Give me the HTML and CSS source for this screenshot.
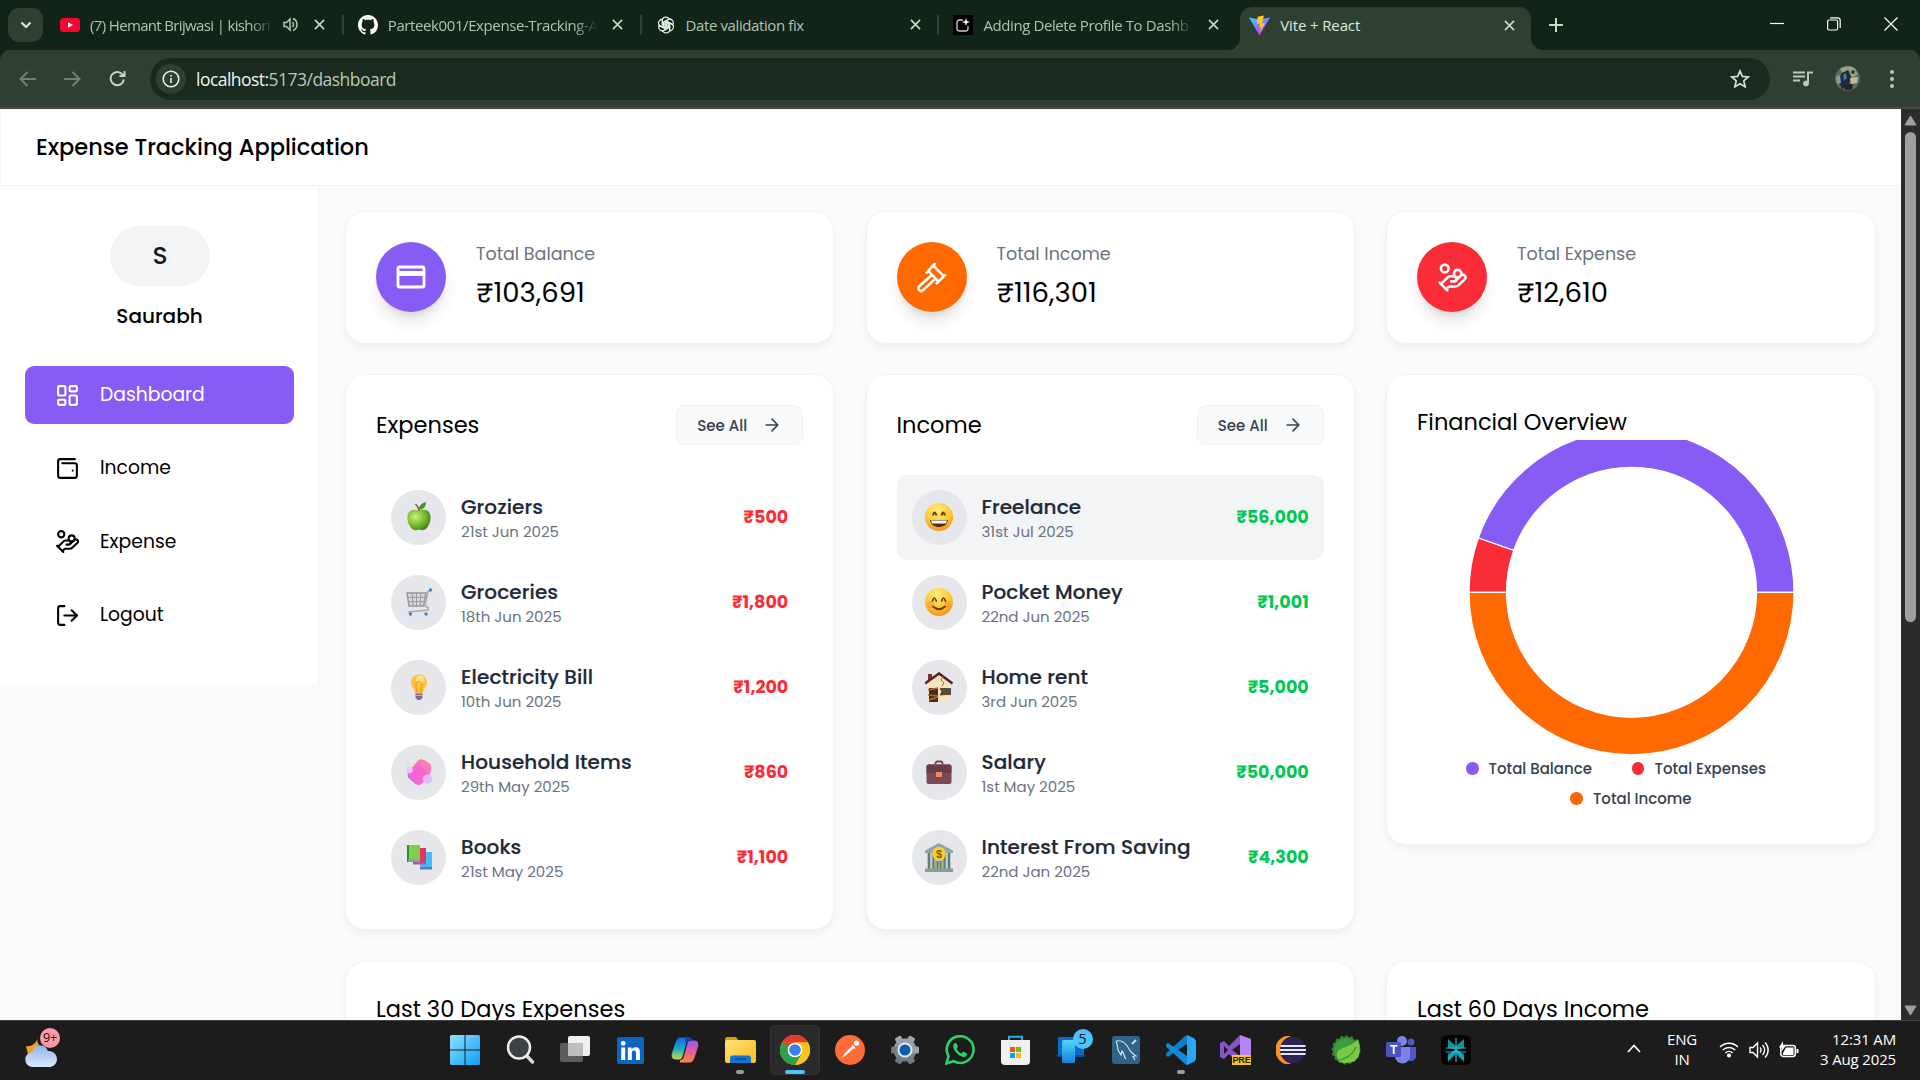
FILE: index.html
```html
<!DOCTYPE html>
<html lang="en">
<head>
<meta charset="utf-8">
<title>Vite + React</title>
<link rel="stylesheet" href="styles.css">
</head>
<body>
<svg class="sprite" aria-hidden="true">
  <symbol id="i-close" viewBox="0 0 12 12"><path d="M1 1l10 10M11 1L1 11" fill="none" stroke="currentColor" stroke-width="1.8"/></symbol>
  <symbol id="i-arrow" viewBox="0 0 24 24"><path d="M5 12h14M12 5l7 7-7 7" fill="none" stroke="currentColor" stroke-width="2" stroke-linecap="round" stroke-linejoin="round"/></symbol>
  <symbol id="i-coins" viewBox="0 0 24 24"><g fill="none" stroke="currentColor" stroke-width="2" stroke-linecap="round" stroke-linejoin="round"><path d="M11 15h2a2 2 0 1 0 0-4h-3c-.6 0-1.1.2-1.4.6L3 17"/><path d="m7 21 1.6-1.4c.3-.4.8-.6 1.4-.6h4c1.1 0 2.1-.4 2.8-1.2l4.6-4.4a2 2 0 0 0-2.75-2.91l-4.2 3.9"/><path d="m2 16 6 6"/><circle cx="16" cy="9" r="2.9"/><circle cx="6" cy="5" r="3"/></g></symbol>
  <linearGradient id="g-win" x1="0" y1="0" x2="1" y2="1"><stop offset="0" stop-color="#8be3fd"/><stop offset="1" stop-color="#0f9bfb"/></linearGradient>
  <linearGradient id="g-cloud" x1="0" y1="0" x2="0" y2="1"><stop offset="0" stop-color="#8fb4ea"/><stop offset="1" stop-color="#dbe9fd"/></linearGradient>
  <linearGradient id="g-folder" x1="0" y1="0" x2="1" y2="1"><stop offset="0" stop-color="#ffe078"/><stop offset="1" stop-color="#fdbd1c"/></linearGradient>
  <linearGradient id="g-vite" x1="0" y1="0" x2=".5" y2="1"><stop offset="0" stop-color="#41d1ff"/><stop offset="1" stop-color="#bd34fe"/></linearGradient>
  <linearGradient id="g-cop1" x1="0" y1="0" x2="0" y2="1"><stop offset="0" stop-color="#1668e8"/><stop offset=".5" stop-color="#18a7c8"/><stop offset="1" stop-color="#c8d83c"/></linearGradient>
  <linearGradient id="g-cop2" x1="0" y1="0" x2="0" y2="1"><stop offset="0" stop-color="#9a5be8"/><stop offset=".5" stop-color="#e25b9a"/><stop offset="1" stop-color="#fb8b3c"/></linearGradient>
  <radialGradient id="g-face" cx=".45" cy=".25" r=".8"><stop offset="0" stop-color="#fff07a"/><stop offset=".6" stop-color="#fdc52f"/><stop offset="1" stop-color="#f08a1c"/></radialGradient>
  <radialGradient id="g-apple" cx=".35" cy=".35" r=".75"><stop offset="0" stop-color="#c8f08a"/><stop offset=".5" stop-color="#7cc22c"/><stop offset="1" stop-color="#3d7a1c"/></radialGradient>
  <linearGradient id="g-soap" x1="1" y1="0" x2="0" y2="1"><stop offset="0" stop-color="#fb86a0"/><stop offset=".5" stop-color="#f86fce"/><stop offset="1" stop-color="#dd62e0"/></linearGradient>
  <linearGradient id="g-gray" x1="0" y1="0" x2="0" y2="1"><stop offset="0" stop-color="#a3a9b2"/><stop offset="1" stop-color="#6c747e"/></linearGradient>
  <linearGradient id="g-phone" x1="0" y1="0" x2="0" y2="1"><stop offset="0" stop-color="#50d8f8"/><stop offset="1" stop-color="#1580d8"/></linearGradient>
</svg>

<div class="tabstrip">
  <div class="tab-search"><svg width="12" height="8" viewBox="0 0 12 8"><path d="M1.5 1.5L6 6l4.500-4.500" fill="none" stroke="#d5e8d6" stroke-width="2.200"/></svg></div>
  <div class="tab">
    <svg width="20" height="20" viewBox="0 0 20 20"><rect y="3" width="20" height="14" rx="4" fill="#ff0033"/><path d="M8 7.200v5.600l5-2.800z" fill="#fff"/></svg>
    <span class="tab-title fade snug">(7) Hemant Brijwasi | kishori</span>
    <svg class="audio" width="15" height="15" viewBox="0 0 15 15" fill="none" stroke="#b5c9b6" stroke-width="1.500"><path d="M1 5.500h2.500L7 2v11L3.500 9.500H1z"/><path d="M9.500 5a3.500 3.500 0 0 1 0 5M10 1.500a6.500 6.500 0 0 1 0 12"/></svg>
    <svg class="x"><use href="#i-close"/></svg>
  </div>
  <div class="tab">
    <svg width="20" height="20" viewBox="0 0 16 16"><path fill="#fff" d="M8 0C3.580 0 0 3.580 0 8c0 3.540 2.290 6.530 5.470 7.590.4.070.55-.17.55-.38 0-.19-.01-.82-.01-1.490-2.010.37-2.530-.49-2.690-.94-.09-.23-.48-.94-.82-1.130-.28-.15-.68-.52-.01-.53.63-.01 1.080.58 1.230.82.72 1.210 1.870.87 2.330.66.07-.52.28-.87.51-1.070-1.780-.2-3.640-.89-3.640-3.950 0-.87.31-1.590.82-2.150-.08-.2-.36-1.020.08-2.120 0 0 .67-.21 2.200.82.64-.18 1.320-.27 2-.27s1.360.09 2 .27c1.530-1.040 2.200-.82 2.200-.82.44 1.100.16 1.920.08 2.120.51.56.82 1.270.82 2.150 0 3.070-1.870 3.750-3.650 3.950.29.25.54.73.54 1.480 0 1.070-.01 1.930-.01 2.200 0 .21.15.46.55.38A8.010 8.010 0 0 0 16 8c0-4.420-3.580-8-8-8z"/></svg>
    <span class="tab-title fade">Parteek001/Expense-Tracking-A</span>
    <svg class="x"><use href="#i-close"/></svg>
  </div>
  <div class="tab">
    <svg width="20" height="18" viewBox="0 0 24 24" fill="none" stroke="#e6efe6" stroke-width="1.600"><g id="petal"><path d="M12 1.500c-3 0-5 2-5 5V13l5 3 M12 1.500c2 0 3.600 1 4.400 2.500L11 7v5.500"/></g><use href="#petal" transform="rotate(60 12 12)"/><use href="#petal" transform="rotate(120 12 12)"/><use href="#petal" transform="rotate(180 12 12)"/><use href="#petal" transform="rotate(240 12 12)"/><use href="#petal" transform="rotate(300 12 12)"/></svg>
    <span class="tab-title">Date validation fix</span>
    <svg class="x"><use href="#i-close"/></svg>
  </div>
  <div class="tab">
    <svg width="20" height="20" viewBox="0 0 20 20"><path fill="#000" d="M0 0h20v20H0z"/><path d="M10 5H6.500A2.500 2.500 0 0 0 4 7.500v6A2.500 2.500 0 0 0 6.500 16h6a2.500 2.500 0 0 0 2.500-2.500V11" fill="none" stroke="#ccc" stroke-width="1.300"/><path d="M13 3l1 3 3 1-3 1-1 3-1-3-3-1 3-1z" fill="#fff"/></svg>
    <span class="tab-title fade">Adding Delete Profile To Dashb</span>
    <svg class="x"><use href="#i-close"/></svg>
  </div>
  <div class="tab tab-active">
    <svg width="21" height="21" viewBox="0 0 21 21"><path d="M0 2.500l10.500 18L21 2.500 10.500 4.500z" fill="url(#g-vite)"/><path d="M15 .5L8.500 1.800 8 9l3-.6-.8 4.200 1.800-.5-1 5.400 5-9.500-3 .6L15 .5z" fill="#ffc820"/></svg>
    <span class="tab-title">Vite + React</span>
    <svg class="x"><use href="#i-close"/></svg>
  </div>
  <svg class="plus" width="14" height="14" viewBox="0 0 14 14"><path d="M7 0v14M0 7h14" stroke="#c5dbc6" stroke-width="2"/></svg>
  <div class="window-controls">
    <svg width="14" height="14" viewBox="0 0 14 14"><path d="M0 6.500h14" stroke="#fff" stroke-width="1.200"/></svg>
    <svg width="14" height="14" viewBox="0 0 14 14" fill="none" stroke="#fff" stroke-width="1.200"><rect x=".6" y="3" width="10" height="10" rx="1.500"/><path d="M3 .8h7.500a2.700 2.700 0 0 1 2.700 2.700V11"/></svg>
    <svg width="14" height="14" viewBox="0 0 14 14"><path d="M.5.5l13 13M13.500.5l-13 13" stroke="#fff" stroke-width="1.200"/></svg>
  </div>
</div>

<div class="toolbar">
  <svg class="tb-nav dim" width="17" height="16" viewBox="0 0 17 16"><path d="M17 8H2M8.500 1L1.500 8l7 7"/></svg>
  <svg class="tb-nav dim" width="17" height="16" viewBox="0 0 17 16"><path d="M0 8h15M8.500 1l7 7-7 7"/></svg>
  <svg class="tb-nav" width="17" height="17" viewBox="0 0 17 17"><path d="M14.800 9.500a6.600 6.600 0 1 1-1.600-5.300L15.500 6M15.500 1v5h-5"/></svg>
  <div class="omnibox">
    <div class="site-info"><svg width="18" height="18" viewBox="0 0 18 18" fill="none" stroke="#e8f3e8" stroke-width="1.600"><circle cx="9" cy="9" r="7.800"/><path d="M9 8v5M9 5v1.600"/></svg></div>
    <span class="url">localhost:<span class="url-rest">5173/dashboard</span></span>
    <svg width="20" height="20" viewBox="0 0 20 20" fill="none" stroke="#d5dfd5" stroke-width="1.700"><path d="M10 2l2.400 5.400 5.800.6-4.400 3.900 1.300 5.800L10 14.700l-5.100 3 1.300-5.800L1.800 8l5.800-.6z"/></svg>
  </div>
  <svg class="media" width="20" height="16" viewBox="0 0 20 16" fill="none" stroke="#b5cdb6" stroke-width="2"><path d="M0 1.500h12M0 5.500h12M0 9.500h7M15 12V1.500h5"/><circle cx="13" cy="12.500" r="2.500" fill="#b5cdb6" stroke-width="1"/></svg>
  <svg class="avatar-pic" width="25" height="25" viewBox="0 0 25 25"><circle cx="12.500" cy="12.500" r="12.500" fill="#5d6a58"/><path d="M5 3c5-3 10-4 15-.5l3 6-6 3-3-7-6 3z" fill="#96a189"/><path d="M7 7l6-3 3 8-3 9-6 2-4-8z" fill="#1c2c3e"/><path d="M8 9l3-2 1 5-3 3z" fill="#4a7391"/><path d="M15 12l8-1-1 6-6 1z" fill="#cbb9a0"/><path d="M1 11l4-2 1 8-4 1z" fill="#7aa0b0"/><path d="M9 18l9 0-1 6-7 0z" fill="#20262c"/><path d="M17 4l3 1-1 3-3-1z" fill="#2e3a2a"/></svg>
  <svg width="4" height="18" viewBox="0 0 4 18" fill="#b5cdb6"><circle cx="2" cy="2" r="2"/><circle cx="2" cy="9" r="2"/><circle cx="2" cy="16" r="2"/></svg>
</div>

<div class="viewport">
  <div class="page">
    <header class="app-header">Expense Tracking Application</header>
    <div class="app-body">
      <aside class="sidebar">
        <div class="initial">S</div>
        <div class="user">Saurabh</div>
        <nav class="nav">
          <a class="nav-item active"><svg viewBox="0 0 24 24"><rect width="7" height="9" x="3" y="3" rx="1"/><rect width="7" height="5" x="14" y="3" rx="1"/><rect width="7" height="9" x="14" y="12" rx="1"/><rect width="7" height="5" x="3" y="16" rx="1"/></svg><span>Dashboard</span></a>
          <a class="nav-item"><svg viewBox="0 0 24 24"><path d="M17 14h.01"/><path d="M7 7h12a2 2 0 0 1 2 2v10a2 2 0 0 1-2 2H5a2 2 0 0 1-2-2V5a2 2 0 0 1 2-2h14"/></svg><span>Income</span></a>
          <a class="nav-item"><svg><use href="#i-coins"/></svg><span>Expense</span></a>
          <a class="nav-item"><svg viewBox="0 0 24 24"><path d="m16 17 5-5-5-5"/><path d="M21 12H9"/><path d="M9 21H5a2 2 0 0 1-2-2V5a2 2 0 0 1 2-2h4"/></svg><span>Logout</span></a>
        </nav>
      </aside>

      <main class="main">
        <section class="card stat">
          <div class="badge purple"><svg width="30" height="24" viewBox="0 0 30 24"><rect x="2" y="2" width="26" height="20" rx="1.500" fill="none" stroke="#fff" stroke-width="2.800"/><path d="M2 6h26v5H2z" fill="#fff"/></svg></div>
          <div><div class="stat-label">Total Balance</div><div class="stat-value">₹103,691</div></div>
        </section>
        <section class="card stat">
          <div class="badge orange"><svg width="31" height="31" viewBox="0 0 24 24" fill="none" stroke="#fff" stroke-width="2" stroke-linecap="round" stroke-linejoin="round"><path d="M8.200 8.200l6.300-6.700M16 16.500l6.500-6.300M13.500 2.800l7.700 8M9.700 7l7.600 8M12 10.200l-9.500 8.600a2.100 2.100 0 0 0 3 3L15 12.900"/></svg></div>
          <div><div class="stat-label">Total Income</div><div class="stat-value">₹116,301</div></div>
        </section>
        <section class="card stat">
          <div class="badge red"><svg width="31" height="31"><use href="#i-coins"/></svg></div>
          <div><div class="stat-label">Total Expense</div><div class="stat-value">₹12,610</div></div>
        </section>

        <section class="card list">
          <div class="card-head"><h2>Expenses</h2><button class="see-all">See All <svg width="20" height="20"><use href="#i-arrow"/></svg></button></div>
          <div class="item"><div class="icon"><svg width="30" height="30" viewBox="0 0 30 30"><path d="M15 9c2-1.500 6-2 9 0 4 3.500 3 11-.5 16-2.500 4-6 3.500-8.500 2.600-2.500.9-6 1.400-8.500-2.600C3 20 2 12.500 6 9c3-2 7-1.500 9 0z" fill="url(#g-apple)"/><path d="M15 8c0-5 3-7 7-8 0 5-3 7.500-7 8z" fill="#3e9427"/><path d="M15 9c0-3-1.500-5-3.500-7" fill="none" stroke="#6b5540" stroke-width="1.300"/></svg></div><div class="info"><div class="name">Groziers</div><div class="date">21st Jun 2025</div></div><div class="amount out">₹500</div></div>
          <div class="item"><div class="icon"><svg width="28" height="28" viewBox="0 0 28 28"><path d="M2 5h19l-2.500 13H4z" fill="#d9d9de" stroke="#9b969f" stroke-width="1.500"/><path d="M2.500 9.300h18M3 13.700h17M7 5l1 13M11.500 5v13M16 5l-1 13" stroke="#9b969f" stroke-width="1"/><path d="M26 2l-3 1-3 15 3 1.500V22L3 24" fill="none" stroke="#b0a9b4" stroke-width="1.600"/><circle cx="25.500" cy="2" r="1.700" fill="#3d7fd0"/><circle cx="5.500" cy="26" r="1.700" fill="#3d7fd0"/><circle cx="21" cy="26" r="1.700" fill="#3d7fd0"/></svg></div><div class="info"><div class="name">Groceries</div><div class="date">18th Jun 2025</div></div><div class="amount out">₹1,800</div></div>
          <div class="item"><div class="icon"><svg width="28" height="28" viewBox="0 0 28 28"><path d="M14 1.500c5 0 8 3.500 8 8 0 4.500-3.500 6-4 11h-8c-.5-5-4-6.500-4-11 0-4.500 3-8 8-8z" fill="#fcc43c"/><circle cx="15" cy="6.500" r="4" fill="#ffe9a0" opacity=".7"/><path d="M12.500 20l-1.500-7a3.200 3.200 0 1 1 6 0l-1.500 7" fill="none" stroke="#f09a2a" stroke-width="1.200"/><path d="M10.500 20.500h7v4l-2 2.500h-3l-2-2.500z" fill="#84689a"/><path d="M10.500 22.500h7" stroke="#c2aed2"/></svg></div><div class="info"><div class="name">Electricity Bill</div><div class="date">10th Jun 2025</div></div><div class="amount out">₹1,200</div></div>
          <div class="item"><div class="icon"><svg width="28" height="28" viewBox="0 0 28 28"><path d="M13 2.500c2-1.500 4-1.500 6-.5l5 3c2 1 2.500 3 2 6.500l-1.500 7L16 26.500c-2 1-4 .5-5.500-.5L4 20.500c-1.500-1.500-2-4-1-6z" fill="url(#g-soap)"/><path d="M12 7.500l7 4 2.500 4-7 7-8-5.500 1-4z" fill="#f55fd0" opacity=".7"/><circle cx="4.500" cy="12" r="3.200" fill="#e7c6fb"/><circle cx="22.500" cy="21" r="4.600" fill="#dfbcf9"/><circle cx="3" cy="5" r="1.200" fill="#eed2fa"/></svg></div><div class="info"><div class="name">Household Items</div><div class="date">29th May 2025</div></div><div class="amount out">₹860</div></div>
          <div class="item"><div class="icon"><svg width="28" height="28" viewBox="0 0 28 28"><path d="M15 9h12v16H15z" fill="#3fc0f6"/><path d="M15 24h12v2.500H15z" fill="#5a7bc4"/><path d="M8 5h13v14H8z" fill="#e33263"/><path d="M8 19h13v2.500H8z" fill="#b85588"/><path d="M2 2h13v15H2z" fill="#7ed04c"/><path d="M2 2h2v17H2z" fill="#2e8a3c"/><path d="M3 16.500h12v2.500H3z" fill="#8e9ab0"/></svg></div><div class="info"><div class="name">Books</div><div class="date">21st May 2025</div></div><div class="amount out">₹1,100</div></div>
        </section>

        <section class="card list">
          <div class="card-head"><h2>Income</h2><button class="see-all">See All <svg width="20" height="20"><use href="#i-arrow"/></svg></button></div>
          <div class="item hovered"><div class="icon"><svg width="28" height="28" viewBox="0 0 28 28"><circle cx="14" cy="14" r="14" fill="url(#g-face)"/><path d="M8 12.500q1.500-6 3.500 0M16.500 12.500q1.500-6 3.500 0" fill="none" stroke="#6b3a12" stroke-width="2"/><path d="M5 17h18c-1 5-4.500 7-9 7s-8-2-9-7z" fill="#5a2c12"/><path d="M6 17.500h16l-1 3H7z" fill="#fff"/></svg></div><div class="info"><div class="name">Freelance</div><div class="date">31st Jul 2025</div></div><div class="amount in">₹56,000</div></div>
          <div class="item"><div class="icon"><svg width="28" height="28" viewBox="0 0 28 28"><circle cx="14" cy="14" r="14" fill="url(#g-face)"/><circle cx="5.500" cy="16.500" r="3.500" fill="#fb8c3a" opacity=".5"/><circle cx="22.500" cy="16.500" r="3.500" fill="#fb8c3a" opacity=".5"/><path d="M7.500 13q1.700-6 3.800 0M16.700 13q1.700-6 3.800 0M8 18.500q6 5.500 12 0" fill="none" stroke="#6b3a12" stroke-width="1.700" stroke-linecap="round"/></svg></div><div class="info"><div class="name">Pocket Money</div><div class="date">22nd Jun 2025</div></div><div class="amount in">₹1,001</div></div>
          <div class="item"><div class="icon"><svg width="28" height="30" viewBox="0 0 28 30"><path d="M3 2h4v7H3z" fill="#7c3434"/><path d="M3 10L14 2l11 9v19H3z" fill="#f6e4bd"/><path d="M0 11.500L14 1.500l13.500 10" fill="none" stroke="#5d2224" stroke-width="2.600"/><path d="M18 4l-2 4 3 3-2 3" fill="none" stroke="#8d7350"/><path d="M4 16h9v14H4z" fill="#4a2c18"/><path d="M3 18l10-2M3 23l10 1M4 28l9-3" stroke="#a56c3a" stroke-width="1.500"/><path d="M16 16h10v7H16z" fill="#41525a"/><path d="M15 17l11 1.500M15 22.500l11-1" stroke="#6e4424" stroke-width="2"/></svg></div><div class="info"><div class="name">Home rent</div><div class="date">3rd Jun 2025</div></div><div class="amount in">₹5,000</div></div>
          <div class="item"><div class="icon"><svg width="28" height="28" viewBox="0 0 28 28"><path d="M10.500 6.500v-1a2 2 0 0 1 2-2h3a2 2 0 0 1 2 2v1" fill="none" stroke="#76444f" stroke-width="1.800"/><rect x="1.500" y="6.500" width="25" height="19.500" rx="2" fill="#7b4a58"/><path d="M1.500 8.500a2 2 0 0 1 2-2h21a2 2 0 0 1 2 2V15h-25z" fill="#6b3d4b"/><path d="M11 14h6v5h-6z" fill="#ee8a5c"/></svg></div><div class="info"><div class="name">Salary</div><div class="date">1st May 2025</div></div><div class="amount in">₹50,000</div></div>
          <div class="item"><div class="icon"><svg width="30" height="30" viewBox="0 0 30 30"><path d="M15 1L1 8.500V11h28V8.500z" fill="#93a5a5"/><path d="M3 11h24v16H3z" fill="#b9c6c4"/><path d="M5 11v16M9.500 11v16M20.500 11v16M25 11v16" stroke="#62787a" stroke-width="2"/><path d="M11.500 19h7v9h-7z" fill="#4c8398"/><path d="M15 19v9M12 19v9M18 19v9" stroke="#dcb433" stroke-width="1.200"/><path d="M1 26.500h28V30H1z" fill="#8b9c9c"/><circle cx="15" cy="11.500" r="6.800" fill="#f5d22c"/><text x="15" y="15.500" class="coin">$</text></svg></div><div class="info"><div class="name">Interest From Saving</div><div class="date">22nd Jan 2025</div></div><div class="amount in">₹4,300</div></div>
        </section>

        <section class="card overview">
          <h2>Financial Overview</h2>
          <svg class="donut" viewBox="0 0 428 315">
            <g transform="translate(214.500 152.300)" stroke="#fff" stroke-width="1.250">
              <path fill="#875cf5" d="M162.500 0A162.500 162.500 0 0 0 -153.200 -54.300L-117.800 -41.800A125 125 0 0 1 125 0z"/>
              <path fill="#fa2c37" d="M-153.200 -54.300A162.500 162.500 0 0 0 -162.500 0H-125A125 125 0 0 1 -117.800 -41.800z"/>
              <path fill="#ff6900" d="M-162.500 0A162.500 162.500 0 0 0 162.500 0H125A125 125 0 0 1 -125 0z"/>
            </g>
          </svg>
          <div class="legend legend-first"><span><i class="purple"></i>Total Balance</span><span><i class="red"></i>Total Expenses</span></div>
          <div class="legend"><span><i class="orange"></i>Total Income</span></div>
        </section>

        <section class="card chart chart-wide"><h2>Last 30 Days Expenses</h2></section>
        <section class="card chart"><h2>Last 60 Days Income</h2></section>
      </main>
    </div>
  </div>
  <div class="scrollbar">
    <svg width="13" height="11" viewBox="0 0 13 11"><path d="M6.500 1L12 10H1z" fill="#9f9f9f" stroke="#9f9f9f" stroke-linejoin="round"/></svg>
    <div class="thumb"></div>
    <svg width="13" height="11" viewBox="0 0 13 11"><path d="M6.500 10L12 1H1z" fill="#9f9f9f" stroke="#9f9f9f" stroke-linejoin="round"/></svg>
  </div>
</div>

<div class="taskbar">
  <div class="weather"><svg width="34" height="34" viewBox="0 0 34 34"><path d="M13 2c-2 6 0 11 8 12l-3 6H3l-2-8c6 1 11-3 12-10z" fill="#f2a01c"/><path d="M8 33a7.500 7.500 0 0 1-.5-15A8 8 0 0 1 23 17a8 8 0 0 1 2 16z" fill="url(#g-cloud)"/></svg><span class="count">9+</span></div>
  <div class="apps">
    <div class="app"><svg width="30" height="30" viewBox="0 0 30 30"><path d="M0 1.500A1.500 1.500 0 0 1 1.500 0H14.500v14.500H0zM15.500 0h13A1.500 1.500 0 0 1 30 1.500v13H15.500zM0 15.500h14.500V30h-13A1.500 1.500 0 0 1 0 28.500zM15.500 15.500H30v13a1.500 1.500 0 0 1-1.500 1.500h-13z" fill="url(#g-win)"/></svg></div>
    <div class="app"><svg width="30" height="30" viewBox="0 0 30 30"><path d="M21 20l6.500 7" stroke="#d5d9de" stroke-width="3.500" stroke-linecap="round"/><circle cx="14" cy="12.500" r="11" fill="#3d4144" stroke="#eceef0" stroke-width="2.500"/></svg></div>
    <div class="app"><svg width="30" height="30" viewBox="0 0 30 30"><rect y="8" width="23" height="19" rx="2" fill="#5c5c5c"/><rect x="8" y="1" width="22" height="20" rx="2" fill="#f0f0f0"/><path d="M8 8h15v13H10a2 2 0 0 1-2-2z" fill="#bdbdbd"/></svg></div>
    <div class="app"><svg width="27" height="27" viewBox="0 0 27 27"><rect width="27" height="27" rx="2" fill="#0a66c2"/><circle cx="6.200" cy="6.400" r="2.400" fill="#fff"/><path d="M4.200 10.500h4V23h-4zM10.800 10.500h3.800v1.700c.8-1.300 2.200-2 4-2 3.700 0 4.400 2.400 4.400 5.600V23h-4v-6.400c0-1.600-.1-3.200-2-3.200s-2.200 1.500-2.200 3.100V23h-4z" fill="#fff"/></svg></div>
    <div class="app"><svg width="30" height="30" viewBox="0 0 30 30"><path d="M20 2.500h-9c-3 0-4.500 2-5.500 5L2 18c-1 3.500 0 6.500 3.500 6.500H9c2 0 3-1 3.700-3.500L16 9c.8-3 2-4 4-4z" fill="url(#g-cop1)"/><path d="M10 27.500h9c3 0 4.500-2 5.500-5L28 12c1-3.500 0-6.500-3.500-6.500H21c-2 0-3 1-3.700 3.500L14 21c-.8 3-2 4-4 4z" fill="url(#g-cop2)"/><path d="M15 2.500h4c2.500 0 3.500 1 4 3h-2c-2.500 0-4 1-5 4z" fill="#1440b8"/></svg></div>
    <div class="app"><svg width="31" height="30" viewBox="0 0 31 30"><path d="M0 4a2 2 0 0 1 2-2h9l3 4h-14z" fill="#dc9a05"/><rect y="5" width="31" height="23" rx="2" fill="url(#g-folder)"/><path d="M5 28v-5a2.500 2.500 0 0 1 2.500-2.500h16A2.500 2.500 0 0 1 26 23v5z" fill="#1573d0"/><path d="M10 24h11" stroke="#0a4c98" stroke-width="1.500"/></svg><i class="run"></i></div>
    <div class="app current"><svg width="30" height="30" viewBox="0 0 30 30"><circle cx="15" cy="15" r="15" fill="#fbbc05"/><path d="M2 7.500A15 15 0 0 1 28 7.500H15z" fill="#e33b2e"/><path d="M15 7.500h13A15 15 0 0 1 15 30l6.500-11.300z" fill="#fcc21b"/><path d="M2 7.500A15 15 0 0 0 15 30l6.500-11.200-13 0z" fill="#2ba24c"/><path d="M2 7.500L8.500 19 15 7.500z" fill="#e33b2e"/><path d="M2 7.500L8.500 18.800 10 12z" fill="#2ba24c"/><circle cx="15" cy="15" r="7.300" fill="#fff"/><circle cx="15" cy="15" r="5.800" fill="#3b7ff0"/></svg><i class="run"></i></div>
    <div class="app"><svg width="30" height="30" viewBox="0 0 30 30"><circle cx="15" cy="15" r="15" fill="#ff6c37"/><path d="M7 23l3-5 8-7.500 1.800 1.800-8 7.200z" fill="#fff"/><circle cx="21.500" cy="8" r="2.600" fill="#fff"/><path d="M17 10.500l3 3" stroke="#fff" stroke-width="1.500"/></svg></div>
    <div class="app"><svg width="30" height="30" viewBox="0 0 30 30"><g fill="url(#g-gray)"><circle cx="15" cy="15" r="11.500"/><rect x="11.500" y="1" width="7" height="28" rx="1.500" transform="rotate(90 15 15)"/><rect x="11.500" y="0" width="7" height="30" rx="1.500" transform="rotate(30 15 15)"/><rect x="11.500" y="0" width="7" height="30" rx="1.500" transform="rotate(-30 15 15)"/></g><circle cx="15" cy="15" r="6.500" fill="#0a5cac" stroke="#e4e9ef" stroke-width="2"/></svg></div>
    <div class="app"><svg width="30" height="30" viewBox="0 0 30 30"><path d="M1.500 28.500l2-7.300a13.400 13.400 0 1 1 5 5z" fill="none" stroke="#25d366" stroke-width="2.600"/><path d="M10 8c-1.500.8-2.300 2.500-1.500 5 1.500 4 5 7.500 9 8.800 2.500.7 4.500-.5 4.800-3l-4-2.200-1.800 2c-2-.8-4.300-3-5-5l1.500-1.800L11.200 8z" fill="#25d366"/></svg></div>
    <div class="app"><svg width="29" height="30" viewBox="0 0 29 30"><path d="M8 6V1.800h13V6" fill="none" stroke="#28a8ea" stroke-width="2"/><path d="M0 5h29v21a4 4 0 0 1-4 4H4a4 4 0 0 1-4-4z" fill="#f0f0f0"/><path d="M9 12h5v5H9z" fill="#f25022"/><path d="M15 12h5v5h-5z" fill="#7fba00"/><path d="M9 18h5v5H9z" fill="#00a4ef"/><path d="M15 18h5v5h-5z" fill="#ffb900"/></svg></div>
    <div class="app"><svg width="30" height="30" viewBox="0 0 30 30"><path d="M2 2h26v18H2z" fill="#0f6cc4"/><path d="M0 20h30l-2 2H2z" fill="#0a4f9c"/><rect x="6" y="5" width="13" height="23" rx="1.500" fill="url(#g-phone)"/></svg><span class="count blue">5</span></div>
    <div class="app"><svg width="28" height="28" viewBox="0 0 28 28"><rect width="28" height="28" rx="3" fill="#2f6488"/><path d="M4 5c5-1 10 2 13 8 2 4 4 5 7 7l-3 .5 2 3.500M4 5c1 3 2 5 2 9l3 5 1-4c2 2 2 6 4 8" fill="none" stroke="#cfe0ec" stroke-width="1.200"/><path d="M20 8l4-4" stroke="#cfe0ec" stroke-width="2"/></svg></div>
    <div class="app"><svg width="31" height="30" viewBox="0 0 31 30"><path d="M22 0l-2 1L1 18.500v2L3 22l19-13z" fill="#0f7ccc"/><path d="M22 30l-2-1L1 11.500v-2L3 8l19 13z" fill="#1489d8"/><path d="M22 0l7.500 3.500L31 6v18l-1.500 2.500L22 30z" fill="#2aa7f2"/></svg><i class="run"></i></div>
    <div class="app"><svg width="31" height="30" viewBox="0 0 31 30"><path d="M0 8l4-2 5 5L20 0v9l-8 6 8 6v9L9 19l-5 5-4-2V8z" fill="#8654c8"/><path d="M4 11v8l4-4z" fill="#1c1c1c"/><path d="M20 0l11 4v22l-11 4z" fill="#b983f5"/><rect x="12" y="20" width="19" height="10" fill="#ffc21e"/><text x="21.500" y="28.200" class="pre">PRE</text></svg></div>
    <div class="app"><svg width="30" height="28" viewBox="0 0 30 28"><path d="M14 0A14 14 0 0 0 14 28A17 17 0 0 1 14 0z" fill="#f7941e" stroke="#f7941e" stroke-width="1.500"/><ellipse cx="16.500" cy="14" rx="12.500" ry="13.500" fill="#2c2255"/><path d="M4.500 10h25M4 14h26M4.500 18h25" stroke="#e8e6f2" stroke-width="2"/></svg></div>
    <div class="app"><svg width="30" height="30" viewBox="0 0 30 30"><circle cx="15" cy="15" r="13" fill="#3d9a3f" stroke="#2e8535" stroke-width="3" stroke-dasharray="3 2"/><path d="M27 4c4 12 2 23-11 24-7 .500-10-3-10-8 0-9 13-6 21-16z" fill="#7ac943"/><path d="M6 25c7 0 15-4 19-13" fill="none" stroke="#3d9a3f" stroke-width="1.500"/></svg></div>
    <div class="app"><svg width="30" height="28" viewBox="0 0 30 28"><circle cx="25" cy="6" r="3.500" fill="#5059c9"/><path d="M20 11h10v8a5 5 0 0 1-10 2z" fill="#5059c9"/><circle cx="16" cy="5" r="5" fill="#7b83eb"/><path d="M9 11h15v9a7.500 7.500 0 0 1-15 0z" fill="#7b83eb"/><rect y="6" width="15" height="15" rx="1.500" fill="#4b53bc"/><text x="7.500" y="18" class="teams">T</text></svg></div>
    <div class="app"><svg width="30" height="30" viewBox="0 0 30 30"><rect width="30" height="30" rx="6" fill="#050505"/><path d="M15 11L7 4v9l8 1.500L23 13V4zM15 14.500L7 19v8l8-8 8 8v-8z" fill="#158c9c"/><path d="M15 3v24M5 13h20M5 17h20M15 14.500L7 24M15 14.500L23 24" fill="none" stroke="#1fb8cd" stroke-width="1.200"/></svg></div>
  </div>
  <div class="tray">
    <svg width="14" height="9" viewBox="0 0 14 9"><path d="M1 8l6-6.500L13 8" fill="none" stroke="#fff" stroke-width="1.700"/></svg>
    <div class="lang">ENG<br>IN</div>
    <div class="status">
      <svg width="20" height="17" viewBox="0 0 20 17" fill="none" stroke="#fff" stroke-width="1.500"><path d="M1 6a12.500 12.500 0 0 1 18 0M3.800 9a8.700 8.700 0 0 1 12.400 0M6.500 12a5 5 0 0 1 7 0"/><circle cx="10" cy="14.500" r="1.300" fill="#fff"/></svg>
      <svg width="20" height="18" viewBox="0 0 20 18" fill="none" stroke="#fff" stroke-width="1.400"><path d="M1 6.500h3L8.500 2v14L4 11.500H1zM11 6.500a3.500 3.500 0 0 1 0 5M13.500 4a7 7 0 0 1 0 10M16 1.500a10.500 10.500 0 0 1 0 15"/></svg>
      <svg width="20" height="17" viewBox="0 0 20 17"><rect x="1.800" y="4.500" width="14.500" height="11" rx="2.500" fill="none" stroke="#fff" stroke-width="1.500"/><path d="M7 6.500h7.500V14H4v-2zM17.500 8h2v4h-2z" fill="#fff"/><path d="M4 0L0 6.500h3L2 11l5-6.500H4z" fill="#fff"/></svg>
    </div>
    <div class="clock">12:31 AM<br>3 Aug 2025</div>
  </div>
</div>
</body>
</html>
```
FILE: styles.css
```css
* { box-sizing: border-box; margin: 0; padding: 0; }
body { width: 1920px; height: 1080px; overflow: hidden; display: flex; flex-direction: column; background: #122318; font-family: "Poppins", "Inter", sans-serif; }
svg { display: block; flex: none; }
.sprite { position: absolute; width: 0; height: 0; }

/* browser tabs */
.tabstrip { height: 50px; flex: none; display: flex; align-items: center; background: #122318; padding-left: 8px; font-family: "Segoe UI", "Open Sans", sans-serif; }
.tab-search { width: 35px; height: 34px; border-radius: 11px; background: #2f4033; display: flex; align-items: center; justify-content: center; margin-right: 3px; }
.tab { width: 297.8px; height: 36px; padding: 0 18.5px 1px 14px; display: flex; align-items: center; gap: 10px; color: #aec3b0; background: linear-gradient(#2f4033, #2f4033) no-repeat right 8px / 2px 20px; }
.tab:nth-child(5) { background: none; }
.tab-title { flex: 1; min-width: 0; overflow: hidden; white-space: nowrap; font-size: 15px; letter-spacing: -0.4px; }
.snug { letter-spacing: -0.65px; }
.fade { -webkit-mask-image: linear-gradient(to right, #000 calc(100% - 24px), transparent); mask-image: linear-gradient(to right, #000 calc(100% - 24px), transparent); }
.x { width: 11px; height: 11px; color: #c5d8c6; margin-left: 4px; }
.audio { margin-right: 2px; margin-left: -1px; }
.tab-active { position: relative; width: 291px; height: 43px; align-self: flex-end; margin-left: 3px; padding: 0 16px 7px 9px; border-radius: 12px 12px 0 0; background: #2f4033; color: #dcebdc; }
.tab-active .tab-title { letter-spacing: -0.12px; }
.tab-active::before, .tab-active::after { content: ""; position: absolute; bottom: 0; width: 12px; height: 12px; }
.tab-active::before { left: -12px; background: radial-gradient(circle at 0 0, transparent 12px, #2f4033 12px); }
.tab-active::after { right: -12px; background: radial-gradient(circle at 100% 0, transparent 12px, #2f4033 12px); }
.plus { margin-left: 18px; }
.window-controls { margin-left: auto; display: flex; gap: 43px; padding: 0 22px 2px 0; }

/* toolbar */
.toolbar { height: 59px; flex: none; display: flex; align-items: center; padding: 0 26px 0 19px; background: #2f4033; border-bottom: 2px solid #474a47; border-radius: 10px 10px 0 0; }
.tb-nav { fill: none; stroke: #bfd6c0; stroke-width: 2; margin-right: 28px; }
.tb-nav.dim { stroke: #6f8372; }
.omnibox { width: 1620px; height: 42px; margin-left: -4px; border-radius: 21px; background: #1a2a1e; display: flex; align-items: center; padding: 0 20px 0 6px; }
.site-info { width: 30px; height: 30px; border-radius: 50%; background: #2f4033; display: flex; align-items: center; justify-content: center; margin-right: 10px; }
.url { flex: 1; font: 17.5px "Segoe UI", "Open Sans", sans-serif; letter-spacing: -0.53px; color: #eef6ee; }
.url-rest { color: #b9c7ba; }
.media { margin-left: 23px; margin-right: 22px; }
.avatar-pic { margin-right: auto; }

/* page */
.viewport { height: 911px; flex: none; display: flex; overflow: hidden; }
.page { width: 1901px; height: 911px; overflow: hidden; background: #fbfbfb; }
.app-header { height: 77px; padding: 0 35px 1px; display: flex; align-items: center; background: #fff; border: 1px solid #f3f4f6; border-right: 0; font-size: 22.5px; font-weight: 500; color: #000; }
.app-body { display: flex; align-items: flex-start; }
.sidebar { width: 319px; height: 498px; background: #fff; border-right: 1px solid #f1f2f4; padding: 40px 24.5px 0; display: flex; flex-direction: column; align-items: center; }
.initial { width: 100px; height: 60px; margin-left: 2px; border-radius: 30px; background: #f3f4f6; display: flex; align-items: center; justify-content: center; font-size: 25px; font-weight: 500; color: #101828; }
.user { margin: 15px 0 0 1px; line-height: 30px; font-size: 20px; font-weight: 500; }
.nav { margin-top: 35px; width: 100%; display: flex; flex-direction: column; gap: 15.2px; }
.nav-item { height: 58.2px; border-radius: 9px; padding-left: 30px; display: flex; align-items: center; gap: 20.5px; font-size: 18.75px; color: #000; }
.nav-item span { padding-bottom: 1px; }
.nav-item svg { width: 25px; height: 25px; fill: none; stroke: currentColor; stroke-width: 2; stroke-linecap: round; stroke-linejoin: round; }
.active { background: #875cf5; color: #fff; }

.main { flex: 1; padding: 25px 25px 0 26px; display: grid; grid-template-columns: repeat(3, 1fr); gap: 30.250px 31.250px; align-items: start; }
.card { background: #fff; border: 1px solid #f3f4f6; border-radius: 20px; padding: 30px; box-shadow: 0 5px 8px -1px rgba(225, 228, 236, .4), 0 2px 5px -2px rgba(225, 228, 236, .4); }
h2 { font-size: 22.500px; font-weight: 400; line-height: 34px; color: #000; }

.stat { height: 132.500px; display: flex; align-items: flex-start; gap: 30px; }
.badge { width: 70px; height: 70px; border-radius: 50%; color: #fff; display: flex; align-items: center; justify-content: center; box-shadow: 0 12px 18px -4px rgba(0, 0, 0, .12), 0 5px 8px -4px rgba(0, 0, 0, .1); }
.purple { background: #875cf5; }
.orange { background: #ff6900; }
.red { background: #fa2c37; }
.stat-label { font-size: 17.500px; line-height: 26px; margin-top: -1.500px; color: #6a7282; }
.stat-value { font-size: 27.500px; line-height: 42px; margin-top: 5.500px; color: #000; }

.list { height: 556.500px; }
.card-head { height: 41px; display: flex; align-items: center; justify-content: space-between; margin-bottom: 29px; }
.see-all { width: 127px; height: 40px; padding: 0 20px; display: flex; align-items: center; justify-content: space-between; background: #f9fafb; border: 1px solid #f0f2f5; border-radius: 9px; font: 500 15px "Poppins", "Inter", sans-serif; color: #364153; }
.item { height: 85px; border-radius: 10px; padding: 0 15px; display: flex; align-items: center; gap: 15px; }
.hovered { background: #f3f4f6; }
.icon { width: 55px; height: 55px; border-radius: 50%; background: #e5e7eb; display: flex; align-items: center; justify-content: center; }
.info { flex: 1; padding-top: 2.500px; }
.name { font-size: 20px; line-height: 27px; font-weight: 500; color: #1e2939; letter-spacing: 0.1px; -webkit-text-stroke: 0.2px #1e2939; }
.date { font-size: 15px; line-height: 22px; color: #6a7282; }
.amount { font-size: 17.500px; font-weight: 700; }
.out { color: #fb2c36; }
.in { color: #00c951; }
.coin { font: 700 11px "Liberation Sans", sans-serif; fill: #77600c; text-anchor: middle; }

.overview { height: 471.500px; display: flex; flex-direction: column; padding-bottom: 0; }
.donut { width: 428px; height: 315px; margin-top: 1px; }
.legend { height: 30px; display: flex; align-items: center; justify-content: center; gap: 40px; font-size: 15px; font-weight: 500; color: #364153; }
.legend span { display: flex; align-items: center; gap: 10px; }
.legend i { width: 12.500px; height: 12.500px; border-radius: 50%; }
.legend-first { margin-top: -1.500px; padding-right: 30px; }
.chart { height: 400px; }
.chart-wide { grid-column: span 2; }

.scrollbar { width: 19px; background: #2c2c2c; display: flex; flex-direction: column; align-items: center; padding: 6px 0 4px; }
.thumb { width: 11px; height: 490px; margin: 6px 0 auto; border-radius: 6px; background: #9f9f9f; }

/* taskbar */
.taskbar { height: 60px; flex: none; display: flex; align-items: center; justify-content: space-between; background: #1c1c1c; border-top: 1px solid #434343; color: #fff; font: 15px "Segoe UI", "Open Sans", sans-serif; letter-spacing: -0.15px; }
.weather { position: relative; margin-left: 25px; width: 415px; }
.count { position: absolute; left: 15px; top: -6px; width: 20px; height: 20px; border-radius: 50%; background: #ff99a4; color: #111; font-size: 12.500px; line-height: 20px; text-align: center; }
.count.blue { left: 27px; top: 4px; background: #4cc2ff; font-size: 14px; }
.apps { display: flex; gap: 5.050px; margin: 0 auto 1px 0; }
.app { position: relative; width: 50px; height: 50px; border-radius: 5px; display: flex; align-items: center; justify-content: center; }
.current { background: #2a2a2a; border: 1px solid #343434; }
.run { position: absolute; left: 21px; bottom: 1px; width: 8px; height: 4px; border-radius: 2px; background: #9a9a9a; }
.current .run { left: 14px; bottom: 0; width: 20px; background: #4cc2ff; }
.pre { font: 700 9px "Liberation Sans", sans-serif; fill: #221a00; text-anchor: middle; }
.teams { font: 700 12px "Liberation Sans", sans-serif; fill: #fff; text-anchor: middle; }
.tray { display: flex; align-items: center; padding: 0 24px 4px 0; line-height: 20px; }
.lang { margin-left: 23px; width: 36px; text-align: center; }
.status { display: flex; gap: 10px; margin: 2px 0 0 19px; }
.clock { margin-left: 17px; width: 80px; text-align: right; }
```
